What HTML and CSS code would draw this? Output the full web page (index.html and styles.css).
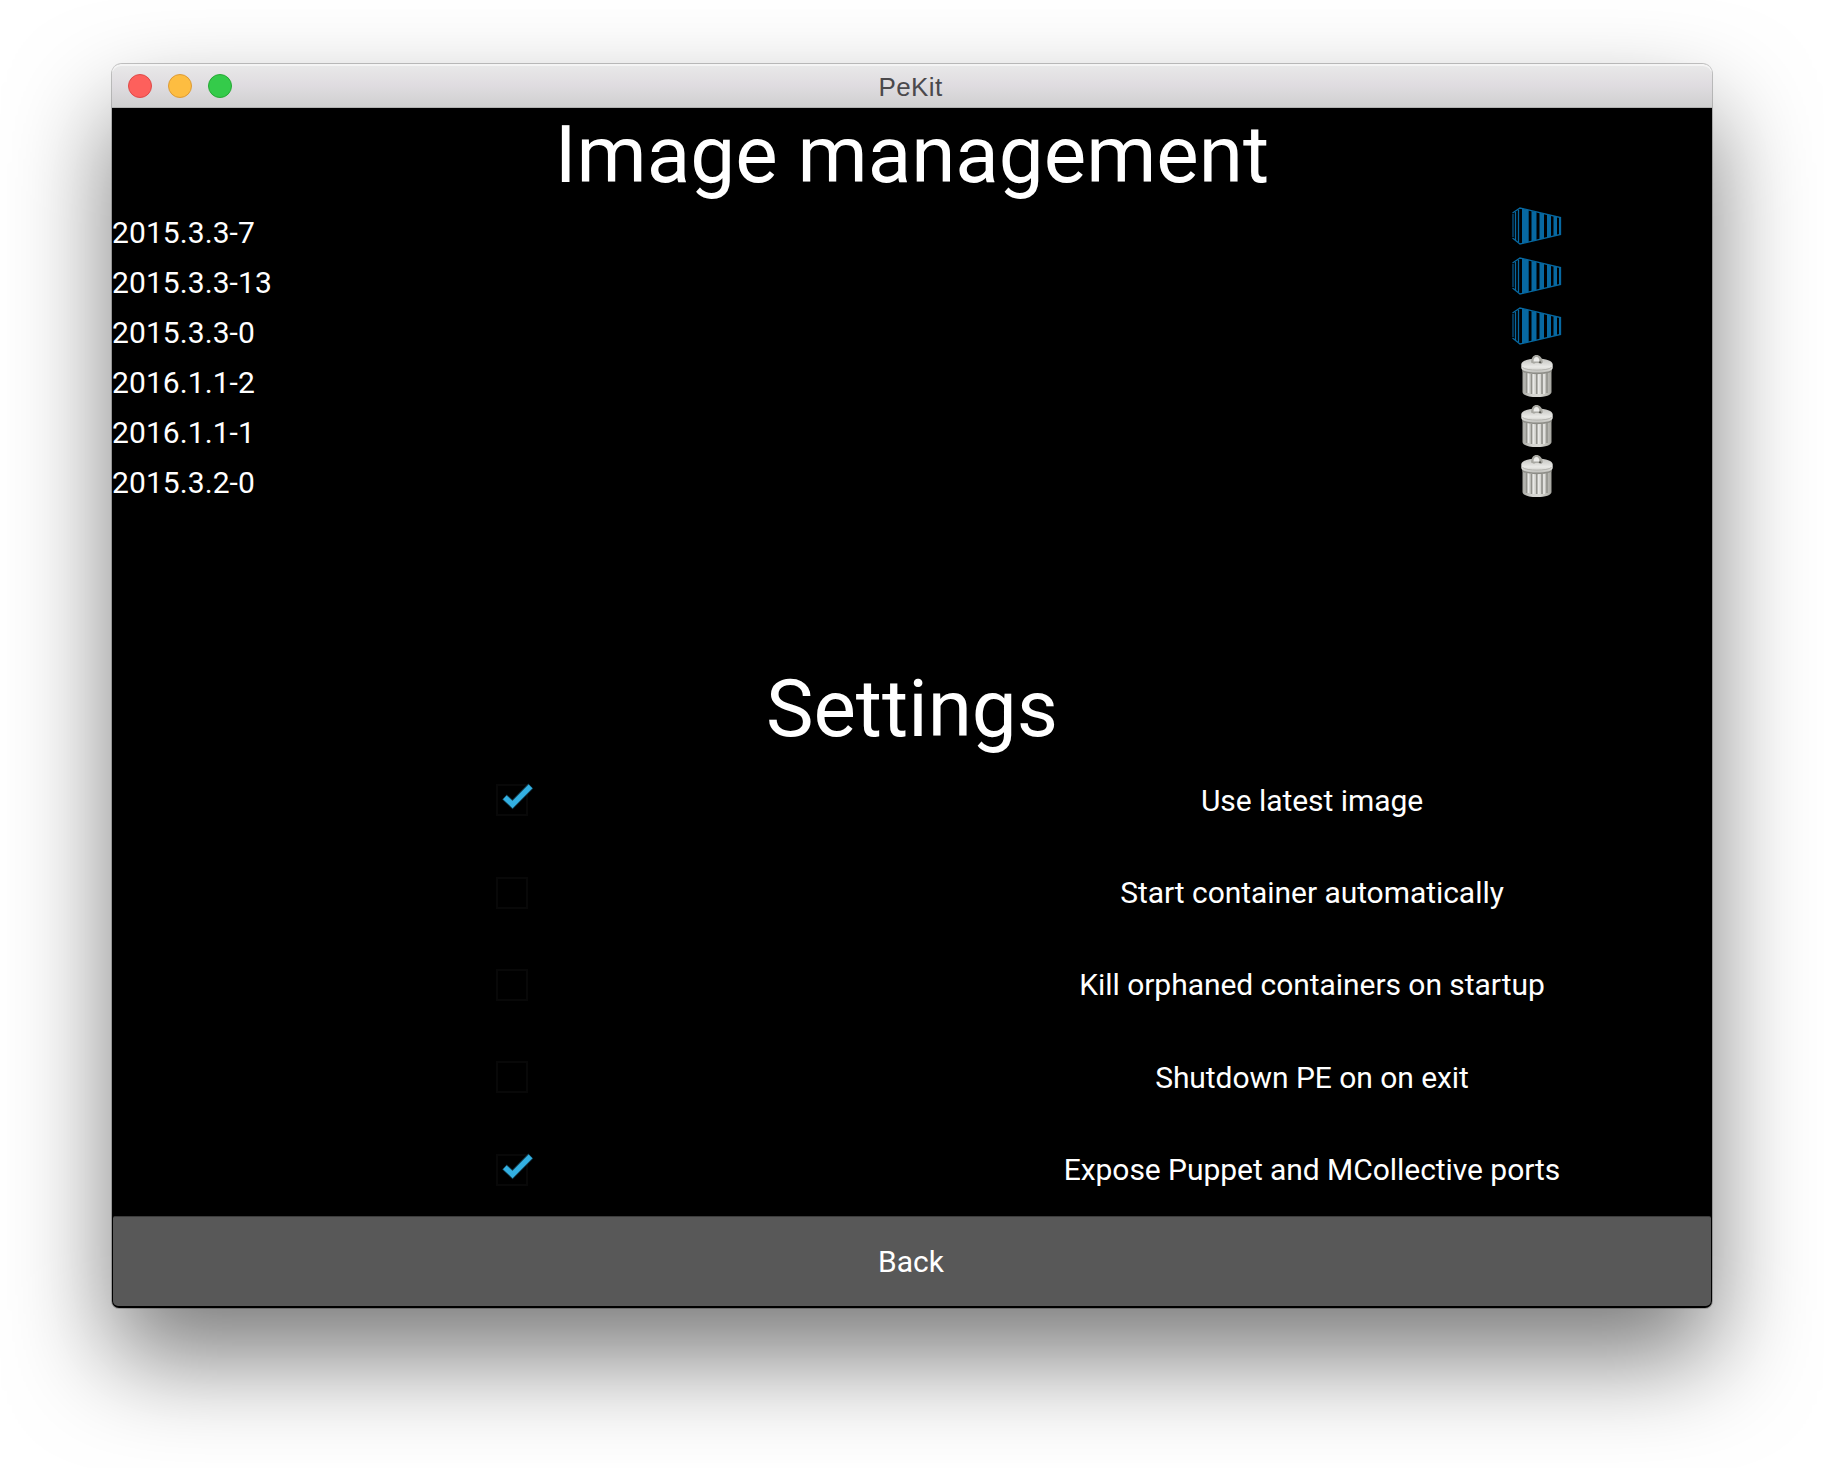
FILE: index.html
```html
<!DOCTYPE html>
<html lang="en">
<head>
<meta charset="utf-8">
<title>PeKit</title>
<link rel="stylesheet" href="styles.css">
</head>
<body>
<svg class="defs" width="0" height="0" aria-hidden="true">
  <defs>
    <linearGradient id="can" x1="0" x2="1" y1="0" y2="0">
      <stop offset="0" stop-color="#a9a9a4"/><stop offset=".3" stop-color="#d2d2ce"/><stop offset=".6" stop-color="#d9d9d5"/><stop offset="1" stop-color="#a6a6a0"/>
    </linearGradient>
    <linearGradient id="lid" x1="0" x2="0" y1="0" y2="1">
      <stop offset="0" stop-color="#c2c2be"/><stop offset=".6" stop-color="#eaeae7"/><stop offset="1" stop-color="#c0c0bb"/>
    </linearGradient>
    <symbol id="container" viewBox="0 0 50 38">
      <path d="M1 7v23" stroke="#04456e" stroke-width="1.6"/>
      <path d="M.5 6 8 1l40.500 9.500v17L8 37 .5 31" fill="none" stroke="#0768a1" stroke-width="1.300"/>
      <path d="M3.500 5v28M6.500 3v32" stroke="#0768a1" stroke-width="1.300"/>
      <path d="M10 1.500 16.700 3v32L10 36.500zM19.500 4l5 1.200v27.900l-5 1.200zM27.500 5.800l4.500 1v24.600l-4.500 1zM35 7.500l4 1v21.200l-4 1zM41.500 9l3.500.8v18.400l-3.500.8zM47 10.200l2 .5v16.600l-2 .5z" fill="#0768a1"/>
    </symbol>
    <symbol id="trash" viewBox="0 0 32 44">
      <path d="M1.500 13h29v25c0 3-6 5-14.500 5S1.500 41 1.500 38z" fill="url(#can)"/>
      <path d="M5.500 19v20M10.500 20v20M15.700 20v20M21 20v20M26 19v20" stroke="#92928c" stroke-width="1.600"/>
      <path d="M7.500 19v20M12.500 20v20M17.700 20v20M23 20v20" stroke="#e9e9e6" stroke-width="1.500"/>
      <path d="M1.500 15c4 4 25 4 29 0v2.500c-4 3.500-25 3.500-29 0z" fill="#8d8d87"/>
      <path d="M.3 10.500C.3 7 7 4.500 16 4.500S31.700 7 31.700 10.500V14c0 3-7 4.500-15.700 4.500S.3 17 .3 14z" fill="url(#lid)"/>
      <path d="M1.500 13.500c4 3.500 25 3.500 29 0" fill="none" stroke="#b2b2ad" stroke-width="1"/>
      <path d="M10 8.500C10.500 3 12.500 1 15.500 1s5.500 2 6.500 7.500l-3 1.200c-2-1.200-4-1.200-6 0z" fill="#a8a8a2"/>
      <path d="M12.500 7.500c0-3 1.200-4.500 3-4.500s2.800 1.500 3 4.500z" fill="#ececea"/>
      <path d="M19 6.500l1.800 3-3-.8z" fill="#55554f"/>
    </symbol>
    <symbol id="tick" viewBox="0 0 32 27">
      <path d="m2.500 14 8 7.500L28.800 3" fill="none" stroke="#123f52" stroke-width="6.800"/>
      <path d="m2.800 14.300 7.700 7.200L28.500 3.300" fill="none" stroke="#33b0e2" stroke-width="5.200"/>
    </symbol>
  </defs>
</svg>

<main class="window">
  <header class="titlebar">
    <div class="lights"><i class="light close"></i><i class="light minimize"></i><i class="light zoom"></i></div>
    <span class="name">PeKit</span>
  </header>
  <div class="content">
    <h1 class="heading">Image management</h1>
    <ul class="images">
      <li class="image"><span class="version">2015.3.3-7</span><svg class="container"><use href="#container"/></svg></li>
      <li class="image"><span class="version">2015.3.3-13</span><svg class="container"><use href="#container"/></svg></li>
      <li class="image"><span class="version">2015.3.3-0</span><svg class="container"><use href="#container"/></svg></li>
      <li class="image"><span class="version">2016.1.1-2</span><svg class="trash"><use href="#trash"/></svg></li>
      <li class="image"><span class="version">2016.1.1-1</span><svg class="trash"><use href="#trash"/></svg></li>
      <li class="image"><span class="version">2015.3.2-0</span><svg class="trash"><use href="#trash"/></svg></li>
    </ul>
    <h1 class="heading">Settings</h1>
    <div class="setting"><span class="box"><svg class="tick"><use href="#tick"/></svg></span><span>Use latest image</span></div>
    <div class="setting"><span class="box"></span><span>Start container automatically</span></div>
    <div class="setting"><span class="box"></span><span>Kill orphaned containers on startup</span></div>
    <div class="setting"><span class="box"></span><span>Shutdown PE on on exit</span></div>
    <div class="setting"><span class="box"><svg class="tick"><use href="#tick"/></svg></span><span>Expose Puppet and MCollective ports</span></div>
    <button class="back">Back</button>
  </div>
</main>
</body>
</html>
```
FILE: styles.css
```css
* { box-sizing: border-box; }

body {
  margin: 0;
  height: 1468px;
  padding: 64px 112px 0;
  background: #fff;
  overflow: hidden;
  font-family: Roboto, sans-serif;
}

.defs { position: absolute; }

.window {
  width: 1600px;
  height: 1244px;
  border-radius: 10px 10px 7px 7px;
  background: #000;
  box-shadow: 0 0 0 1px rgba(0, 0, 0, .22), 0 50px 100px rgba(0, 0, 0, .52);
}

.titlebar {
  display: grid;
  grid-template-columns: 1fr auto 1fr;
  align-items: center;
  height: 44px;
  padding: 0 16px;
  border-radius: 9px 9px 0 0;
  border-bottom: 1px solid #b2b2b2;
  background: linear-gradient(#e9e9e9, #dfdce0 50%, #d0d0d0);
  box-shadow: inset 0 2px 0 #f4f4f4;
}

.lights { display: flex; gap: 16px; }

.light {
  width: 24px;
  height: 24px;
  border: 1px solid;
  border-radius: 50%;
}

.close { background: #fd605c; border-color: #df4a49; }
.minimize { background: #fdbd41; border-color: #dd9b36; }
.zoom { background: #34cb4a; border-color: #27a935; }

.name {
  padding: 2px 3px 0 0;
  color: #4b494c;
  font: 26px/42px "Liberation Sans", sans-serif;
  letter-spacing: .4px;
}

.content {
  display: grid;
  grid-template-rows: 1fr 5fr repeat(7, 1fr);
  height: 1200px;
  color: #fff;
  font-size: 30px;
}

.heading {
  margin: 0;
  padding-top: 2px;
  text-align: center;
  font-size: 80px;
  font-weight: 400;
  line-height: 90px;
}

.images {
  margin: 0;
  padding: 0;
  list-style: none;
}

.image {
  display: grid;
  grid-template-columns: 1250px 350px;
  align-items: center;
  justify-items: center;
  height: 50px;
}

.version {
  justify-self: start;
  padding-top: 15px;
  letter-spacing: .08px;
}

.container { width: 50px; height: 38px; margin-top: 1px; }
.trash { width: 32px; height: 44px; margin-top: 1px; }

.setting {
  display: grid;
  grid-template-columns: 1fr 1fr;
  align-items: center;
  justify-items: center;
  letter-spacing: -.05px;
}

.box {
  position: relative;
  width: 32px;
  height: 32px;
  border: 2px solid #080808;
}

.tick {
  position: absolute;
  left: 4px;
  top: -3px;
  width: 32px;
  height: 27px;
}

.back {
  margin: 0 1px 2px;
  padding: 0 2px 0 0;
  border: 0;
  border-top: 1px solid #3c3c3c;
  border-radius: 2px 2px 5px 5px;
  background: #585858;
  color: #fff;
  font: inherit;
}
```
